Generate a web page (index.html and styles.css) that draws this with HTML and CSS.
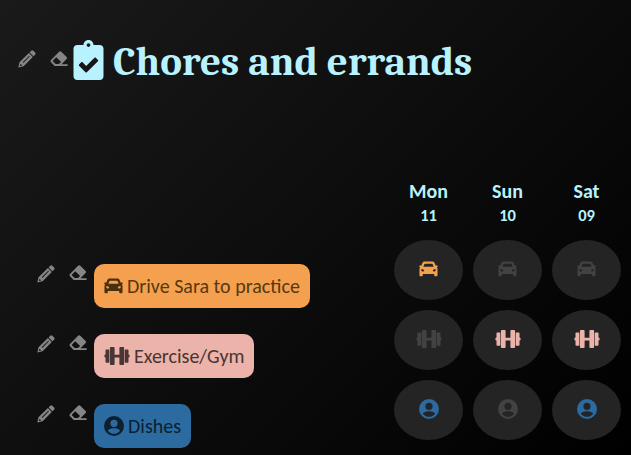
FILE: index.html
```
<!DOCTYPE html>
<html lang="en">
<head>
<meta charset="utf-8">
<title>Chores and errands</title>
<link rel="stylesheet" href="styles.css">
</head>
<body>
<svg class="symbols" aria-hidden="true">
  <symbol id="pencil" viewBox="0 0 18 18"><path fill-rule="evenodd" d="M13.200.8Q14.300-.1 15.300.8L17.100 2.600Q18 3.600 17.100 4.700L15.500 6.300 11.600 2.400ZM10.900 3.100 14.800 7 5.600 16.200.3 17.600 1.500 12.200ZM11.300 5.700 4.700 12.300 5.300 12.900 11.900 6.300ZM2.500 13.700 1.900 16 4.200 15.400Z"/></symbol>
  <symbol id="eraser" viewBox="0 0 18 16"><path fill-rule="evenodd" d="M9.1.8Q10.2-.1 11.3.8L16.6 6Q17.6 7 16.6 8.1L11.5 13.2H17.6V15H4.7L1 11.3Q0 10.2 1 9.1ZM6.2 6.2 2.6 10 5.6 13.1H8.9L11.1 11.1Z"/></symbol>
  <symbol id="clipboard" viewBox="0 0 384 512"><path d="M336 64h-80c0-35.3-28.7-64-64-64s-64 28.7-64 64H48C21.5 64 0 85.5 0 112v352c0 26.500 21.500 48 48 48h288c26.500 0 48-21.500 48-48V112c0-26.500-21.500-48-48-48zM192 40c13.300 0 24 10.700 24 24s-10.700 24-24 24-24-10.700-24-24 10.700-24 24-24zm121.200 231.800l-143 141.800c-4.700 4.700-12.300 4.600-17-.1l-82.600-83.300c-4.700-4.700-4.600-12.300.1-17L99.100 285c4.700-4.700 12.300-4.600 17 .1l46 46.400 106-105.200c4.700-4.700 12.300-4.600 17 .1l28.200 28.400c4.700 4.800 4.600 12.300-.1 17z"/></symbol>
  <symbol id="car" viewBox="0 0 20 16"><path fill-rule="evenodd" d="M5.8 0H14.2Q15.700 0 16.300 1.400L17.500 4.400H19Q20 4.400 19.700 5.300L19.400 6.100 18.700 6.200Q19.500 7 19.500 8.300V14.500Q19.500 15.500 18.500 15.500H17Q16 15.500 16 14.500V13.200H4V14.500Q4 15.500 3 15.500H1.500Q.5 15.500.5 14.500V8.300Q.5 7 1.300 6.200L.6 6.100.3 5.300Q0 4.400 1 4.400H2.500L3.700 1.400Q4.300 0 5.800 0ZM6.300 2.400Q5.800 2.400 5.600 2.900L4.600 5.700H15.400L14.400 2.900Q14.200 2.400 13.700 2.400ZM2.500 8.300V9.500Q2.500 10.500 4.200 10.500 5.500 10.500 5.500 9.800 4.800 8 3.300 8 2.500 8 2.500 8.300ZM17.500 8.300Q17.500 8 16.700 8 15.200 8 14.500 9.800 14.500 10.500 15.800 10.500 17.500 10.500 17.500 9.500Z"/></symbol>
  <symbol id="dumbbell" viewBox="0 0 26 18"><path d="M6.800 0H9.700Q10.600 0 10.600.9V7.700H15.400V.9Q15.400 0 16.300 0H19.200Q20.100 0 20.100.9V17.100Q20.100 18 19.200 18H16.300Q15.400 18 15.400 17.100V10.500H10.600V17.100Q10.600 18 9.700 18H6.800Q5.900 18 5.900 17.100V.9Q5.900 0 6.800 0ZM2.300 2.500H4.500Q5.300 2.500 5.300 3.300V14.900Q5.300 15.700 4.500 15.700H2.300Q1.500 15.700 1.500 14.900V10.600Q.3 10.600.3 9.100T1.500 7.600V3.300Q1.500 2.500 2.300 2.500ZM21.500 2.500H23.700Q24.500 2.500 24.500 3.300V7.600Q25.700 7.600 25.700 9.100T24.500 10.600V14.900Q24.500 15.700 23.700 15.700H21.500Q20.700 15.700 20.700 14.900V3.300Q20.700 2.500 21.500 2.500Z"/></symbol>
  <symbol id="person" viewBox="0 0 20 20"><path fill-rule="evenodd" d="M10 0A10 10 0 1 1 10 20 10 10 0 0 1 10 0ZM10 3.700A3.600 3.600 0 1 0 10 10.900 3.600 3.600 0 0 0 10 3.700ZM10 12.200C7 12.200 4 13.500 4 14.700 5.300 16.700 7.500 17.800 10 17.800S14.700 16.700 16 14.700C16 13.500 13 12.200 10 12.200Z"/></symbol>
</svg>
<header class="title">
  <svg class="tool pencil"><use href="#pencil"/></svg>
  <svg class="tool eraser"><use href="#eraser"/></svg>
  <svg class="clipboard"><use href="#clipboard"/></svg>
  <h1>Chores and errands</h1>
</header>
<main>
  <div class="row days">
    <div class="day">Mon<small>11</small></div>
    <div class="day">Sun<small>10</small></div>
    <div class="day">Sat<small>09</small></div>
  </div>
  <div class="row drive">
    <div class="task">
      <svg class="tool pencil"><use href="#pencil"/></svg>
      <svg class="tool eraser"><use href="#eraser"/></svg>
      <div class="tag"><svg class="car"><use href="#car"/></svg><span>Drive Sara to practice</span></div>
    </div>
    <div class="cell on"><svg class="car"><use href="#car"/></svg></div>
    <div class="cell"><svg class="car"><use href="#car"/></svg></div>
    <div class="cell"><svg class="car"><use href="#car"/></svg></div>
  </div>
  <div class="row gym">
    <div class="task">
      <svg class="tool pencil"><use href="#pencil"/></svg>
      <svg class="tool eraser"><use href="#eraser"/></svg>
      <div class="tag"><svg class="dumbbell"><use href="#dumbbell"/></svg><span>Exercise/Gym</span></div>
    </div>
    <div class="cell"><svg class="dumbbell"><use href="#dumbbell"/></svg></div>
    <div class="cell on"><svg class="dumbbell"><use href="#dumbbell"/></svg></div>
    <div class="cell on"><svg class="dumbbell"><use href="#dumbbell"/></svg></div>
  </div>
  <div class="row dishes">
    <div class="task">
      <svg class="tool pencil"><use href="#pencil"/></svg>
      <svg class="tool eraser"><use href="#eraser"/></svg>
      <div class="tag"><svg class="person"><use href="#person"/></svg><span>Dishes</span></div>
    </div>
    <div class="cell on"><svg class="person"><use href="#person"/></svg></div>
    <div class="cell"><svg class="person"><use href="#person"/></svg></div>
    <div class="cell on"><svg class="person"><use href="#person"/></svg></div>
  </div>
</main>
</body>
</html>
```
FILE: styles.css
```
* { box-sizing: border-box; }
html { height: 100%; }
body {
  margin: 0;
  height: 100%;
  overflow: hidden;
  background: linear-gradient(135deg, #1a1a1a, #000);
  color: #b9f2ff;
  font-family: Calibri, Carlito, Lato, sans-serif;
}
svg { display: block; flex: none; fill: currentColor; }
.symbols { display: none; }
.tool { color: #858585; }
.pencil { width: 18px; height: 18px; }
.eraser { width: 18px; height: 16px; margin-left: 14px; }
.title { display: flex; height: 179px; padding: 40px 0 0 17.500px; }
.title .tool { margin-top: 10px; }
.title .eraser { margin-top: 11px; }
.clipboard { width: 31px; height: 40px; margin-left: 5px; }
h1 {
  margin: 0 0 0 9.500px;
  font: bold 41px/44px Cambria, Caladea, "Noto Serif", "Liberation Serif", serif;
  white-space: nowrap;
}
.row {
  display: grid;
  grid-template-columns: 347px repeat(3, 69px);
  column-gap: 10px;
  width: 584px;
  height: 70px;
  margin-left: 37px;
}
.days { height: 61px; }
.days .day:first-child { grid-column: 2; }
.day { text-align: center; font-weight: bold; font-size: 20px; line-height: 24px; }
.day small { display: block; font-size: 16.500px; line-height: 25px; }
.task { display: flex; padding-top: 24px; }
.task .tool { margin-top: 1px; }
.tag {
  display: flex;
  align-items: center;
  height: 44px;
  margin-left: 7px;
  padding: 0 10px;
  border-radius: 10px;
  font-size: 20px;
  white-space: nowrap;
}
.tag span { margin-left: 4px; }
.car { width: 19px; height: 16px; }
.dumbbell { width: 26px; height: 18px; }
.person { width: 20px; height: 20px; }
.cell {
  display: flex;
  align-items: center;
  justify-content: center;
  height: 60px;
  padding-bottom: 3px;
  border-radius: 50%;
  background: #242424;
  color: #424242;
}
.drive .tag { background: #f4a04e; color: #563812; }
.drive .tag svg { color: #49300f; }
.drive .on { color: #f4a04e; }
.gym .tag { background: #ecb3aa; color: #473633; }
.gym .on { color: #ecb3aa; }
.dishes .tag { background: #2b6ba0; color: #0d2030; }
.dishes .on { color: #2b6ba0; }
```
